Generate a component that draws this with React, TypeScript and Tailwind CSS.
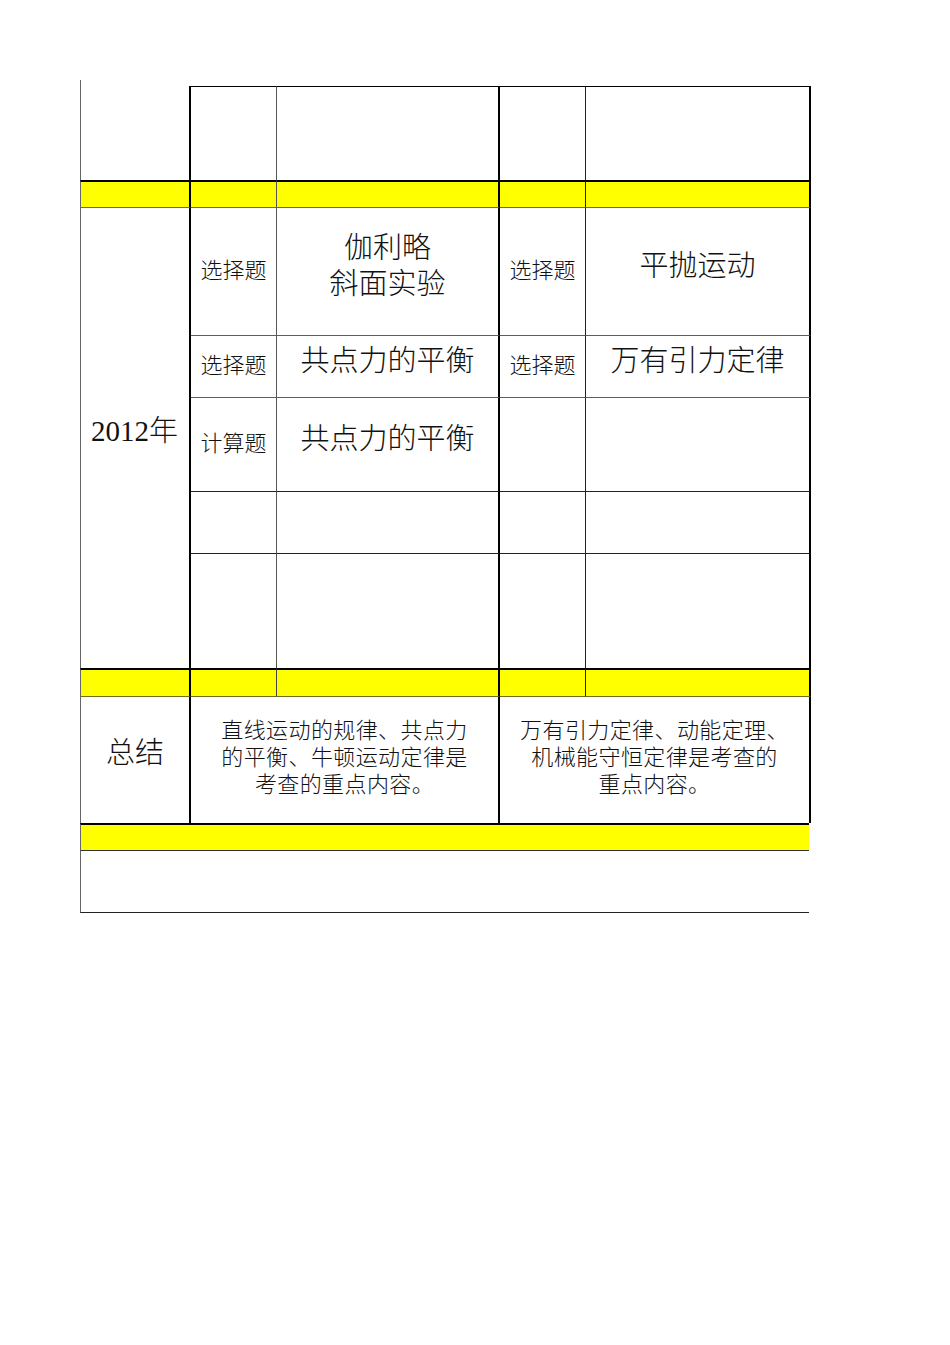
import React from "react";

const F = "font-['Liberation_Serif','Noto_Sans_CJK_SC',serif] text-[#111] font-light";

export default function App() {
  const yellow = "bg-[#ffff00] border-t-2 border-t-black border-b border-b-[#6e6e1e]";
  const small = "flex items-center justify-center text-[22px] leading-[28px] pb-[1px]";
  const big = "flex items-center justify-center text-center text-[29px] leading-[36px] pb-[11px]";
  return (
    <div className={`w-[950px] h-[1345px] bg-white pt-[80px] pl-[80px] ${F}`}>
      <div className="grid grid-cols-[111px_86px_223px_86px_225px] grid-rows-[6px_94px_28px_128px_62px_94px_62px_114px_29px_126px_28px_62px]">
        {/* Column 1 */}
        <div className="col-start-1 row-start-1 border-l border-l-[#666]" />
        <div className="col-start-1 row-start-2 border-l border-l-[#666] border-r-2 border-r-black" />
        <div className={`col-start-1 row-start-3 border-l border-l-[#666] border-r-2 border-r-black ${yellow}`} />
        <div className="col-start-1 row-start-4 row-span-5 border-l border-l-[#666] border-r-2 border-r-black flex items-center justify-center text-[29px] leading-[36px] pb-[15px] pr-[1px]">
          2012年
        </div>
        <div className={`col-start-1 row-start-9 border-l border-l-[#666] border-r-2 border-r-black ${yellow}`} />
        <div className="col-start-1 row-start-10 border-l border-l-[#666] border-r-2 border-r-black flex items-center justify-center text-[29px] leading-[36px] pb-[14px]">
          总结
        </div>

        {/* Row 2 (top) */}
        <div className="col-start-2 row-start-2 border-t border-t-black border-r border-r-[#555]" />
        <div className="col-start-3 row-start-2 border-t border-t-black border-r-2 border-r-black" />
        <div className="col-start-4 row-start-2 border-t border-t-black border-r border-r-[#222]" />
        <div className="col-start-5 row-start-2 border-t border-t-black border-r-2 border-r-black" />

        {/* Row 3 yellow */}
        <div className={`col-start-2 row-start-3 border-r border-r-[#555] ${yellow}`} />
        <div className={`col-start-3 row-start-3 border-r-2 border-r-black ${yellow}`} />
        <div className={`col-start-4 row-start-3 border-r border-r-[#222] ${yellow}`} />
        <div className={`col-start-5 row-start-3 border-r-2 border-r-black ${yellow}`} />

        {/* Row 4 */}
        <div className={`col-start-2 row-start-4 border-r border-r-[#555] border-b border-b-[#5e5e5e] ${small}`}>选择题</div>
        <div className={`col-start-3 row-start-4 border-r-2 border-r-black border-b border-b-[#5e5e5e] ${big}`}>
          <div>伽利略<br />斜面实验</div>
        </div>
        <div className={`col-start-4 row-start-4 border-r border-r-[#222] border-b border-b-[#5e5e5e] ${small}`}>选择题</div>
        <div className={`col-start-5 row-start-4 border-r-2 border-r-black border-b border-b-[#5e5e5e] ${big}`}>平抛运动</div>

        {/* Row 5 */}
        <div className={`col-start-2 row-start-5 border-r border-r-[#555] border-b border-b-[#5e5e5e] ${small}`}>选择题</div>
        <div className={`col-start-3 row-start-5 border-r-2 border-r-black border-b border-b-[#5e5e5e] ${big}`}>共点力的平衡</div>
        <div className={`col-start-4 row-start-5 border-r border-r-[#222] border-b border-b-[#5e5e5e] ${small}`}>选择题</div>
        <div className={`col-start-5 row-start-5 border-r-2 border-r-black border-b border-b-[#5e5e5e] ${big}`}>万有引力定律</div>

        {/* Row 6 */}
        <div className={`col-start-2 row-start-6 border-r border-r-[#555] border-b border-b-[#222] ${small}`}>计算题</div>
        <div className={`col-start-3 row-start-6 border-r-2 border-r-black border-b border-b-[#222] ${big}`}>共点力的平衡</div>
        <div className="col-start-4 row-start-6 border-r border-r-[#222] border-b border-b-[#222]" />
        <div className="col-start-5 row-start-6 border-r-2 border-r-black border-b border-b-[#222]" />

        {/* Row 7 */}
        <div className="col-start-2 row-start-7 border-r border-r-[#555] border-b border-b-[#222]" />
        <div className="col-start-3 row-start-7 border-r-2 border-r-black border-b border-b-[#222]" />
        <div className="col-start-4 row-start-7 border-r border-r-[#222] border-b border-b-[#222]" />
        <div className="col-start-5 row-start-7 border-r-2 border-r-black border-b border-b-[#222]" />

        {/* Row 8 */}
        <div className="col-start-2 row-start-8 border-r border-r-[#555]" />
        <div className="col-start-3 row-start-8 border-r-2 border-r-black" />
        <div className="col-start-4 row-start-8 border-r border-r-[#222]" />
        <div className="col-start-5 row-start-8 border-r-2 border-r-black" />

        {/* Row 9 yellow */}
        <div className={`col-start-2 row-start-9 border-r border-r-[#444] ${yellow}`} />
        <div className={`col-start-3 row-start-9 border-r-2 border-r-black ${yellow}`} />
        <div className={`col-start-4 row-start-9 border-r border-r-[#222] ${yellow}`} />
        <div className={`col-start-5 row-start-9 border-r-2 border-r-black ${yellow}`} />

        {/* Row 10 summary */}
        <div className="col-start-2 col-span-2 row-start-10 border-r-2 border-r-black flex items-center justify-center text-center text-[22px] leading-[27px] pb-[6px] tracking-[0.4px]">
          <div>直线运动的规律、共点力<br />的平衡、牛顿运动定律是<br />考查的重点内容。</div>
        </div>
        <div className="col-start-4 col-span-2 row-start-10 border-r-2 border-r-black flex items-center justify-center text-center text-[22px] leading-[27px] pb-[6px] tracking-[0.4px]">
          <div>万有引力定律、动能定理、<br />机械能守恒定律是考查的<br />重点内容。</div>
        </div>

        {/* Row 11 yellow full */}
        <div className="col-start-1 col-span-5 row-start-11 bg-[#ffff00] border-l border-l-[#666] border-t-2 border-t-black border-b border-b-[#333] mr-[2px]" />

        {/* Row 12 */}
        <div className="col-start-1 col-span-5 row-start-12 border-l border-l-[#666] border-b border-b-[#222] mr-[2px]" />
      </div>
    </div>
  );
}
